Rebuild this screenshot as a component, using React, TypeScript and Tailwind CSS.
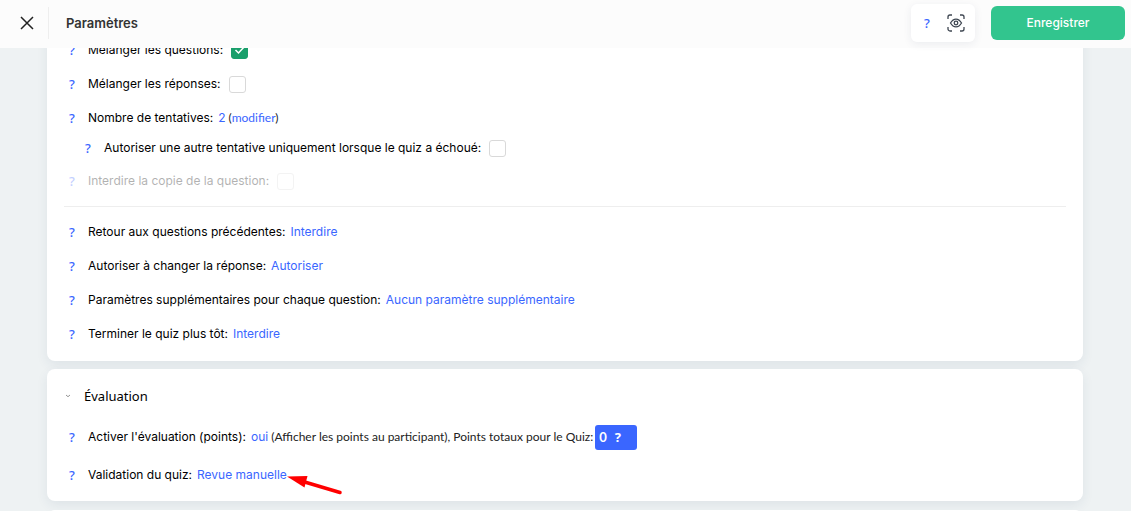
import type { ReactNode } from "react";

const inter = "font-['Inter','Liberation_Sans',sans-serif]";
const lato = "font-['Lato','Liberation_Sans',sans-serif]";
const noto = "font-['Noto_Sans','Open_Sans',sans-serif]";

function Help() {
  return (
    <button type="button" aria-label="Aide" className={`w-4 shrink-0 text-center text-[13px] leading-4 font-medium text-[#3a66ff] ${noto}`}>
      ?
    </button>
  );
}

function Row({ height, className = "", children }: { height: string; className?: string; children: ReactNode }) {
  return (
    <div className={`flex items-center whitespace-nowrap ${height} ${className}`}>
      <Help />
      {children}
    </div>
  );
}

function Check({ id, label, checked = false, disabled = false }: { id: string; label: string; checked?: boolean; disabled?: boolean }) {
  return (
    <>
      <label htmlFor={id} className="ml-2">{label}</label>
      <span className="relative ml-2 flex">
        <input
          id={id}
          type="checkbox"
          defaultChecked={checked}
          disabled={disabled}
          className="peer size-[17px] appearance-none rounded-[3px] border border-[#d9d9d9] bg-white checked:border-[#1a9f6b] checked:bg-[#1a9f6b]"
        />
        <svg viewBox="0 0 17 17" className="pointer-events-none absolute inset-0 hidden size-[17px] peer-checked:block" fill="none" stroke="#fff" strokeWidth="1.5">
          <path d="M4.500 8l3 3 5.500-6" />
        </svg>
      </span>
    </>
  );
}

function Setting({ label, value }: { label: string; value: string }) {
  return (
    <>
      <span className="ml-2">{label}</span>
      <a href="#" className="ml-[5px] text-[#3a66ff]">{value}</a>
    </>
  );
}

export default function App() {
  return (
    <div className={`flex h-screen flex-col overflow-hidden bg-[#eef2f3] text-xs leading-4 text-black ${inter}`}>
      <header className="z-10 flex h-12 shrink-0 items-center bg-[#fcfcfc] pr-[6px] pb-[2px]">
        <button type="button" aria-label="Fermer" className="ml-[19px] flex size-4 items-center justify-center">
          <svg viewBox="0 0 14 14" className="size-[14px]" fill="none" stroke="#222" strokeWidth="1.5">
            <path d="M1 1l12 12M13 1L1 13" />
          </svg>
        </button>
        <span className="ml-[13px] h-8 w-px bg-[#eeeeee]" />
        <h1 className="ml-[17px] text-[13px] leading-4 font-semibold text-[#333]">Paramètres</h1>
        <div className="ml-auto flex h-[38px] w-16 items-center rounded-md bg-white pl-2 shadow-[0_2px_8px_rgba(40,50,90,0.08)]">
          <Help />
          <button type="button" aria-label="Aperçu" className="ml-3">
            <svg viewBox="0 0 18 18" className="size-[18px]" fill="none" stroke="#3f4752" strokeWidth="1.3">
              <path d="M1 5V3a2 2 0 0 1 2-2h2M13 1h2a2 2 0 0 1 2 2v2M17 13v2a2 2 0 0 1-2 2h-2M5 17H3a2 2 0 0 1-2-2v-2" />
              <path d="M3.500 9c1.500-2.600 3.300-3.900 5.500-3.900s4 1.300 5.500 3.900c-1.500 2.600-3.300 3.900-5.500 3.900s-4-1.300-5.500-3.900z" />
              <circle cx="9" cy="9" r="1.800" />
            </svg>
          </button>
        </div>
        <button type="button" className="ml-4 h-[34px] w-[134px] rounded-md bg-[#32c58e] font-medium text-white">Enregistrer</button>
      </header>

      <main className="min-h-0 flex-1 overflow-hidden pr-12 pl-[47px]">
        <section className="-mt-[15px] rounded-lg bg-white px-[17px] pb-[10px] shadow-[0_4px_12px_rgba(40,70,100,0.08)]">
          <Row height="h-[34px]"><Check id="shuffle-questions" label="Mélanger les questions:" checked /></Row>
          <Row height="h-[34px]"><Check id="shuffle-answers" label="Mélanger les réponses:" /></Row>
          <Row height="h-[34px]">
            <span className="ml-2">Nombre de tentatives:</span>
            <a href="#" className="ml-[5px] text-[#3a66ff]">2</a>
            <span className={`ml-[3px] text-[#222] ${lato}`}>(<a href="#" className="text-[#3a66ff]">modifier</a>)</span>
          </Row>
          <Row height="h-[26px]" className="pl-4"><Check id="retry-failed" label="Autoriser une autre tentative uniquement lorsque le quiz a échoué:" /></Row>
          <Row height="h-10" className="opacity-30"><Check id="forbid-copy" label="Interdire la copie de la question:" disabled /></Row>
          <hr className="mt-[5px] mb-2 border-[#eeeeee]" />
          <Row height="h-[34px]"><Setting label="Retour aux questions précédentes:" value="Interdire" /></Row>
          <Row height="h-[34px]"><Setting label="Autoriser à changer la réponse:" value="Autoriser" /></Row>
          <Row height="h-[34px]"><Setting label="Paramètres supplémentaires pour chaque question:" value="Aucun paramètre supplémentaire" /></Row>
          <Row height="h-[34px]"><Setting label="Terminer le quiz plus tôt:" value="Interdire" /></Row>
        </section>

        <section className="mt-2 rounded-lg bg-white px-[17px] pt-[15px] pb-2 shadow-[0_4px_12px_rgba(40,70,100,0.08)]">
          <h2 className={`mb-[9px] h-6 text-[13px] leading-4 font-normal ${noto}`}>
            <button type="button" className="flex h-6 items-center">
              <svg viewBox="0 0 6 4" className="ml-px h-1 w-[6px]" fill="none" stroke="#777" strokeWidth="0.8"><path d="M1 1l2 1.700L5 1" /></svg>
              <span className="ml-[13px]">Évaluation</span>
            </button>
          </h2>
          <Row height="h-10">
            <Setting label="Activer l'évaluation (points):" value="oui" />
            <span className={`ml-[3px] text-[#222] ${lato}`}>(Afficher les points au participant), Points totaux pour le Quiz:</span>
            <button type="button" className={`ml-[2px] flex h-[25px] w-[42px] items-center gap-2 rounded-[3px] bg-[#3a66ff] pl-1 text-[13px] font-bold text-white ${lato}`}>
              <span>0</span><span className={noto}>?</span>
            </button>
          </Row>
          <Row height="h-9">
            <Setting label="Validation du quiz:" value="Revue manuelle" />
            <span className="relative">
              <svg viewBox="0 0 58 22" className="absolute top-0 left-0 h-[22px] w-[58px]" fill="#f00">
                <path d="M0 1.500L20.500 1l-3 11.500z" />
                <path d="M16 6.500l37 11" stroke="#f00" strokeWidth="3.500" strokeLinecap="round" />
              </svg>
            </span>
          </Row>
        </section>

        <section className="mt-[9px] h-12 rounded-lg bg-white" />
      </main>
    </div>
  );
}
